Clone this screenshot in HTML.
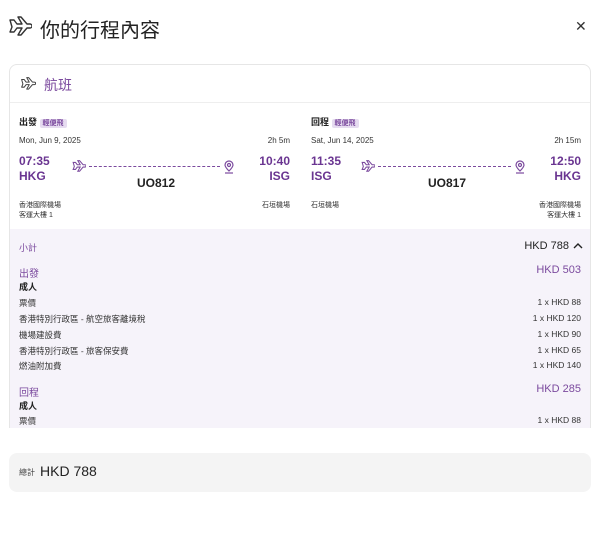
<!DOCTYPE html>
<html><head><meta charset="utf-8"><style>
*{margin:0;padding:0;box-sizing:border-box}
body{width:600px;height:534px;background:#fff;font-family:"Liberation Sans","Noto Sans CJK TC",sans-serif;color:#222;position:relative;overflow:hidden}
.a{position:absolute;white-space:nowrap}
.p{color:#7b4a9e}
.t{color:#6a3591;font-weight:bold;font-size:12px}
.s{font-size:8px;color:#333}
.tag{background:#e6dcf0;color:#7b4a9e;font-size:7px;padding:1px 3px;border-radius:2px}
.r{text-align:right}
.row{font-size:8.5px;color:#333}
</style></head><body>
<svg class="a" style="left:8px;top:16px" width="24" height="22" viewBox="0 0 24 22" fill="none" stroke="#333" stroke-width="1.4" stroke-linejoin="round"><path d="M2 4l4 0 3 4h5l-4-7h3l6 7h3a2 2 0 010 4h-3l-6 7h-3l4-7H9l-3 4H2l2-5z"/></svg>
<div class="a" style="left:40px;top:14px;font-size:20px;color:#222">你的行程內容</div>
<div class="a" style="left:575px;top:18px;font-size:14px;color:#333">✕</div>
<div class="a" style="left:9px;top:64px;width:582px;height:380px;border:1px solid #e6e6e6;border-radius:8px;overflow:hidden">
<svg class="a" style="left:10px;top:12px" width="16" height="14" viewBox="0 0 24 22" fill="none" stroke="#444" stroke-width="1.6" stroke-linejoin="round"><path d="M2 4l4 0 3 4h5l-4-7h3l6 7h3a2 2 0 010 4h-3l-6 7h-3l4-7H9l-3 4H2l2-5z"/></svg>
<div class="a p" style="left:34px;top:10px;font-size:14px">航班</div>
<div class="a" style="left:0;top:37px;width:582px;border-top:1px solid #eee"></div>
</div>
<!-- outbound -->
<div class="a" style="left:19px;top:115px;font-size:9px;font-weight:bold">出發 <span class="tag">輕便飛</span></div>
<div class="a s" style="left:19px;top:136px">Mon, Jun 9, 2025</div>
<div class="a s" style="right:310px;top:136px">2h 5m</div>
<div class="a t" style="left:19px;top:154px">07:35</div>
<div class="a t" style="left:19px;top:169px">HKG</div>
<div class="a t" style="right:310px;top:154px">10:40</div>
<div class="a t" style="right:310px;top:169px">ISG</div>
<svg class="a" style="left:72px;top:160px" width="14" height="13" viewBox="0 0 24 22" fill="none" stroke="#7b4a9e" stroke-width="1.8"><path d="M2 4l4 0 3 4h5l-4-7h3l6 7h3a2 2 0 010 4h-3l-6 7h-3l4-7H9l-3 4H2l2-5z"/></svg>
<div class="a" style="left:89px;top:166px;width:131px;border-top:1px dashed #7b4a9e"></div>
<svg class="a" style="left:223px;top:160px" width="12" height="14" viewBox="0 0 12 14" fill="none" stroke="#7b4a9e" stroke-width="1.2"><path d="M6 11C3 8 2 6.5 2 5a4 4 0 018 0c0 1.5-1 3-4 6z"/><circle cx="6" cy="5" r="1.5"/><path d="M2 13h8"/></svg>
<div class="a" style="left:137px;top:176px;font-size:12px;font-weight:bold">UO812</div>
<div class="a s" style="left:19px;top:200px;font-size:7px">香港國際機場<br>客運大樓 1</div>
<div class="a s" style="right:310px;top:200px;font-size:7px">石垣機場</div>
<!-- return -->
<div class="a" style="left:311px;top:115px;font-size:9px;font-weight:bold">回程 <span class="tag">輕便飛</span></div>
<div class="a s" style="left:311px;top:136px">Sat, Jun 14, 2025</div>
<div class="a s" style="right:19px;top:136px">2h 15m</div>
<div class="a t" style="left:311px;top:154px">11:35</div>
<div class="a t" style="left:311px;top:169px">ISG</div>
<div class="a t" style="right:19px;top:154px">12:50</div>
<div class="a t" style="right:19px;top:169px">HKG</div>
<svg class="a" style="left:361px;top:160px" width="14" height="13" viewBox="0 0 24 22" fill="none" stroke="#7b4a9e" stroke-width="1.8"><path d="M2 4l4 0 3 4h5l-4-7h3l6 7h3a2 2 0 010 4h-3l-6 7h-3l4-7H9l-3 4H2l2-5z"/></svg>
<div class="a" style="left:378px;top:166px;width:133px;border-top:1px dashed #7b4a9e"></div>
<svg class="a" style="left:514px;top:160px" width="12" height="14" viewBox="0 0 12 14" fill="none" stroke="#7b4a9e" stroke-width="1.2"><path d="M6 11C3 8 2 6.5 2 5a4 4 0 018 0c0 1.5-1 3-4 6z"/><circle cx="6" cy="5" r="1.5"/><path d="M2 13h8"/></svg>
<div class="a" style="left:428px;top:176px;font-size:12px;font-weight:bold">UO817</div>
<div class="a s" style="left:311px;top:200px;font-size:7px">石垣機場</div>
<div class="a s r" style="right:19px;top:200px;font-size:7px">香港國際機場<br>客運大樓 1</div>
<!-- pricing -->
<div class="a" style="left:10px;top:229px;width:580px;height:199px;background:#f6f3fa"></div>
<div class="a p" style="left:19px;top:241px;font-size:9px">小計</div>
<div class="a" style="right:31px;top:240px;font-size:11px">HKD 788</div>
<svg class="a" style="left:573px;top:242px" width="10" height="8" viewBox="0 0 10 8" fill="none" stroke="#222" stroke-width="1.4"><path d="M1 6l4-4 4 4"/></svg>
<div class="a p" style="left:19px;top:265px;font-size:10px">出發</div>
<div class="a p" style="right:19px;top:264px;font-size:11px">HKD 503</div>
<div class="a" style="left:19px;top:280px;font-size:9px;font-weight:bold">成人</div>
<div class="a row" style="left:19px;top:297px">票價</div><div class="a row" style="right:19px;top:297px">1 x HKD 88</div>
<div class="a row" style="left:19px;top:313px">香港特別行政區 - 航空旅客離境稅</div><div class="a row" style="right:19px;top:313px">1 x HKD 120</div>
<div class="a row" style="left:19px;top:329px">機場建設費</div><div class="a row" style="right:19px;top:329px">1 x HKD 90</div>
<div class="a row" style="left:19px;top:345px">香港特別行政區 - 旅客保安費</div><div class="a row" style="right:19px;top:345px">1 x HKD 65</div>
<div class="a row" style="left:19px;top:360px">燃油附加費</div><div class="a row" style="right:19px;top:360px">1 x HKD 140</div>
<div class="a p" style="left:19px;top:384px;font-size:10px">回程</div>
<div class="a p" style="right:19px;top:383px;font-size:11px">HKD 285</div>
<div class="a" style="left:19px;top:399px;font-size:9px;font-weight:bold">成人</div>
<div class="a row" style="left:19px;top:415px">票價</div><div class="a row" style="right:19px;top:415px">1 x HKD 88</div>
<div class="a" style="left:0;top:428px;width:600px;height:20px;background:#fff"></div>
<!-- total -->
<div class="a" style="left:9px;top:453px;width:582px;height:39px;background:#f4f4f4;border-radius:8px"></div>
<div class="a" style="left:19px;top:467px;font-size:8px;color:#444">總計</div>
<div class="a" style="left:40px;top:463px;font-size:14px;color:#222">HKD 788</div>
</body></html>
